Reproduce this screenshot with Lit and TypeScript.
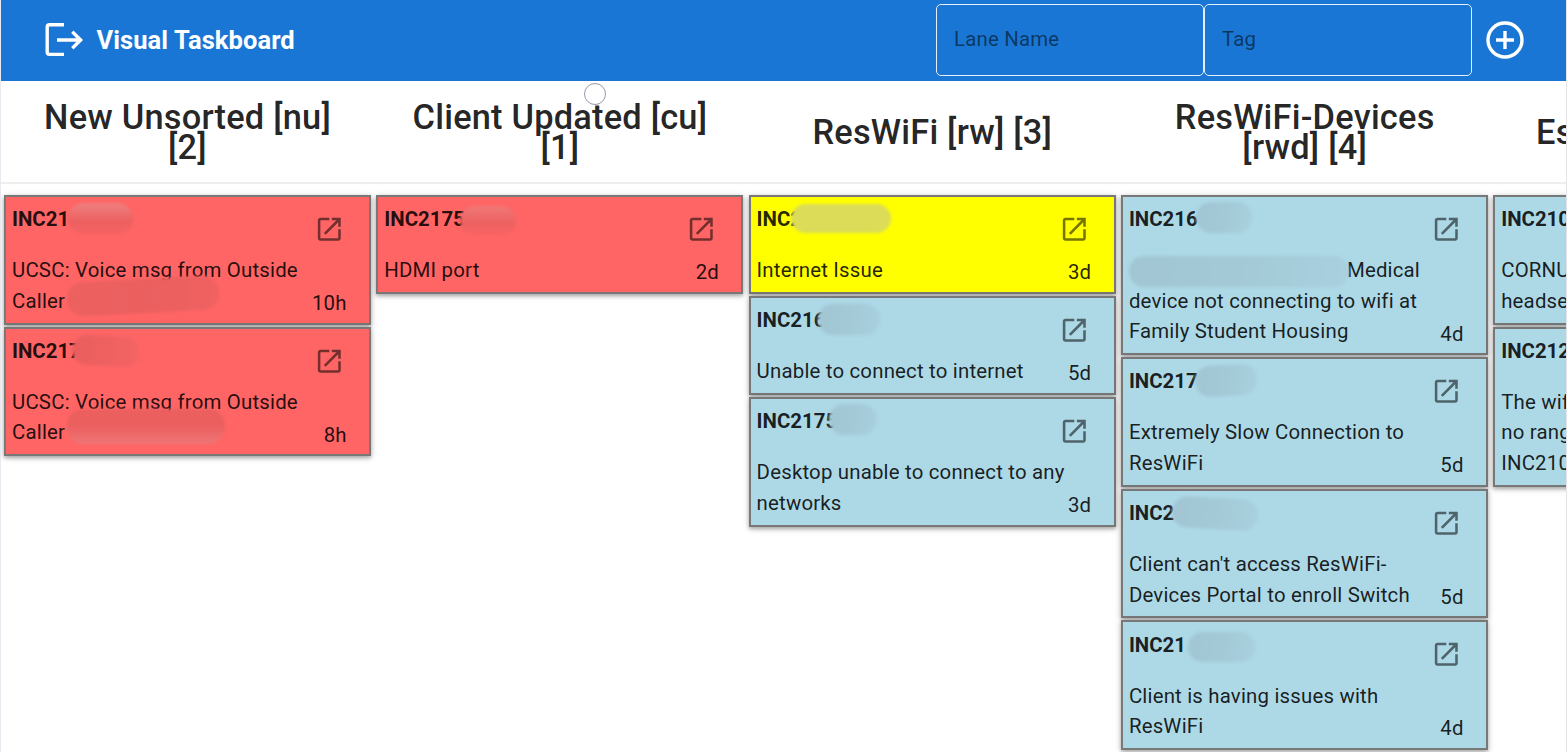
import { LitElement, html, css } from "lit";
import { customElement, property } from "lit/decorators.js";
import { styleMap } from "lit/directives/style-map.js";

// Smudge box relative to the card corner: [left, top, width, height, fill, tilt]
type Smudge = [number, number, number, number, string, number?];
interface Task { id: string; text: string; age?: string; color: string; smudges: Smudge[]; indent?: number; }
interface Lane { title: string; tasks: Task[]; }

const RED = "#ff6565";
const BLUE = "#add8e6";
const YELLOW = "#ffff00";
const R = "linear-gradient(90deg, #ed6060, #ea5f5f 50%, #f06161)";
const B = "linear-gradient(100deg, #a1c5d3, #a3c9d6 50%, #a8d0de)";

const lanes: Lane[] = [
  { title: "New Unsorted [nu]\n[2]", tasks: [
    { id: "INC21", text: "UCSC: Voice msg from Outside\nCaller", age: "10h", color: RED, smudges: [
      [64, 8, 65, 31, "linear-gradient(#ef8080, #ec5f5f 60%, #f66363)"],
      [63, 84, 152, 34, R, -3] ] },
    { id: "INC217", text: "UCSC: Voice msg from Outside\nCaller", age: "8h", color: RED, smudges: [
      [68, 9, 68, 30, "linear-gradient(90deg, #e85e5e, #f56363)", 3],
      [63, 82, 158, 35, "linear-gradient(#ec5f5f 50%, #ee7676)"] ] } ] },
  { title: "Client Updated [cu]\n[1]", tasks: [
    { id: "INC2175", text: "HDMI port", age: "2d", color: RED, smudges: [
      [84, 11, 56, 29, "linear-gradient(#f07878, #ed6060 60%, #fa6464)"] ] } ] },
  { title: "ResWiFi [rw] [3]", tasks: [
    { id: "INC2", text: "Internet Issue", age: "3d", color: YELLOW, smudges: [
      [42, 9, 100, 29, "#dcdc58"] ] },
    { id: "INC216", text: "Unable to connect to internet", age: "5d", color: BLUE, smudges: [
      [69, 8, 62, 31, B] ] },
    { id: "INC2175", text: "Desktop unable to connect to any\nnetworks", age: "3d", color: BLUE, smudges: [
      [80, 7, 48, 31, B] ] } ] },
  { title: "ResWiFi-Devices\n[rwd] [4]", tasks: [
    { id: "INC216", text: "Medical\ndevice not connecting to wifi at\nFamily Student Housing", age: "4d", color: BLUE, indent: 218, smudges: [
      [75, 7, 56, 31, B], [8, 61, 220, 31, B] ] },
    { id: "INC217", text: "Extremely Slow Connection to\nResWiFi", age: "5d", color: BLUE, smudges: [
      [74, 8, 62, 31, B, -3] ] },
    { id: "INC2", text: "Client can't access ResWiFi-\nDevices Portal to enroll Switch", age: "5d", color: BLUE, smudges: [
      [51, 9, 86, 31, B, 3] ] },
    { id: "INC21", text: "Client is having issues with\nResWiFi", age: "4d", color: BLUE, smudges: [
      [67, 12, 67, 30, B] ] } ] },
  { title: "Escalated [esc] [2]", tasks: [
    { id: "INC2102", text: "CORNUCOPIA\nheadset", color: BLUE, smudges: [] },
    { id: "INC2120", text: "The wifi has\nno range\nINC2102", color: BLUE, smudges: [] } ] },
];

@customElement("task-card")
export class TaskCard extends LitElement {
  @property({ attribute: false }) task!: Task;

  static styles = css`
    :host { display: block; }
    .card {
      position: relative; box-sizing: border-box; width: 367px;
      padding: 7.3px 6px 6.1px; border: 2px solid #787878;
      box-shadow: 0 2px 4px rgba(0,0,0,.3), 0 1px 8px rgba(0,0,0,.12);
      font-size: 20.4px; line-height: 30.6px; letter-spacing: .19px; color: rgba(0,0,0,.87);
    }
    .id { font-weight: 700; letter-spacing: 0; margin-bottom: 20.4px; }
    .text { white-space: pre; }
    .open { position: absolute; left: 308px; top: 17px; width: 30.6px; height: 30.6px; fill: rgba(0,0,0,.54); }
    .age { position: absolute; right: 22.3px; bottom: 4px; }
    .smudge { position: absolute; border-radius: 16px; filter: blur(1.8px); }
  `;

  render() {
    const t = this.task;
    return html`<div class="card" style=${styleMap({ background: t.color })}>
      <div class="id">${t.id}</div>
      <div class="text" style=${styleMap({ textIndent: `${t.indent ?? 0}px` })}>${t.text}</div>
      <svg class="open" viewBox="0 0 24 24"><path d="M19 19H5V5h7V3H5c-1.11 0-2 .9-2 2v14c0 1.1.89 2 2 2h14c1.1 0 2-.9 2-2v-7h-2v7zM14 3v2h3.59l-9.83 9.83 1.41 1.41L19 6.41V10h2V3h-7z"/></svg>
      ${t.age ? html`<span class="age">${t.age}</span>` : null}
      ${t.smudges.map(([x, y, w, h, background, tilt]) => html`<span class="smudge" style=${styleMap({
        left: `${x - 2}px`, top: `${y - 2}px`, width: `${w}px`, height: `${h}px`, background, transform: `rotate(${tilt ?? 0}deg)`,
      })}></span>`)}
    </div>`;
  }
}

@customElement("app-root")
export class AppRoot extends LitElement {
  static styles = css`
    :host {
      display: block; position: relative; box-sizing: border-box; width: 1567px; height: 752px; overflow: hidden;
      border-left: 1px solid #e9e9ef; border-right: 1px solid #e4e4e8; background: #fff;
      font-family: Roboto, sans-serif; color: rgba(0,0,0,.87);
    }
    .bar {
      display: flex; align-items: center; box-sizing: border-box; height: 80.5px;
      padding: 0 40.5px 1px 43px; background: #1976d4; color: #fff;
    }
    .exit { width: 40px; height: 40px; flex: none; }
    .name { margin-left: 12.5px; flex: 1; font-size: 25.5px; font-weight: 700; letter-spacing: .08px; line-height: 40px; }
    .field {
      box-sizing: border-box; width: 268px; height: 71.5px; padding: 0 17px; border: 1px solid #e3effa; border-radius: 5px;
      font-size: 20.4px; line-height: 69px; letter-spacing: .19px; color: rgba(0,0,0,.54);
    }
    .add { width: 42px; height: 42px; margin-left: 11.5px; flex: none; }
    .heads { display: flex; gap: 5.4px; padding-left: 3px; height: 101.5px; border-bottom: 2px solid #eee; }
    .head {
      width: 367px; flex: none; display: flex; align-items: center; justify-content: center; text-align: center; white-space: pre;
      box-sizing: border-box; padding-top: 2px;
      font-size: 34.4px; line-height: 30.6px; font-weight: 500; letter-spacing: .2px;
    }
    .lanes { display: flex; gap: 5.3px; padding: 11px 0 0 3px; }
    .lane { display: flex; flex-direction: column; gap: 2px; width: 367px; flex: none; }
    .cursor { position: absolute; left: 583px; top: 83px; width: 20px; height: 20px; border: 1px solid #9a96ac; border-radius: 50%; }
  `;

  render() {
    return html`
      <div class="bar">
        <svg class="exit" viewBox="0 0 40 40" fill="none" stroke="#fff" stroke-width="3.4">
          <path d="M20 4.7H5.5Q3.2 4.7 3.2 7V32Q3.2 34.4 5.5 34.4H20M13 20H37M28.3 11.8L36.6 20L28.3 28.2"/>
        </svg>
        <div class="name">Visual Taskboard</div>
        <div class="field">Lane Name</div>
        <div class="field">Tag</div>
        <svg class="add" viewBox="0 0 42 42" fill="none" stroke="#fff" stroke-width="3.4">
          <circle cx="21" cy="21" r="17"/><path d="M21 12V30M12 21H30"/>
        </svg>
      </div>
      <div class="heads">${lanes.map((l) => html`<div class="head">${l.title}</div>`)}</div>
      <div class="lanes">${lanes.map((l) => html`<div class="lane">${l.tasks.map((t) => html`<task-card .task=${t}></task-card>`)}</div>`)}</div>
      <div class="cursor"></div>`;
  }
}
